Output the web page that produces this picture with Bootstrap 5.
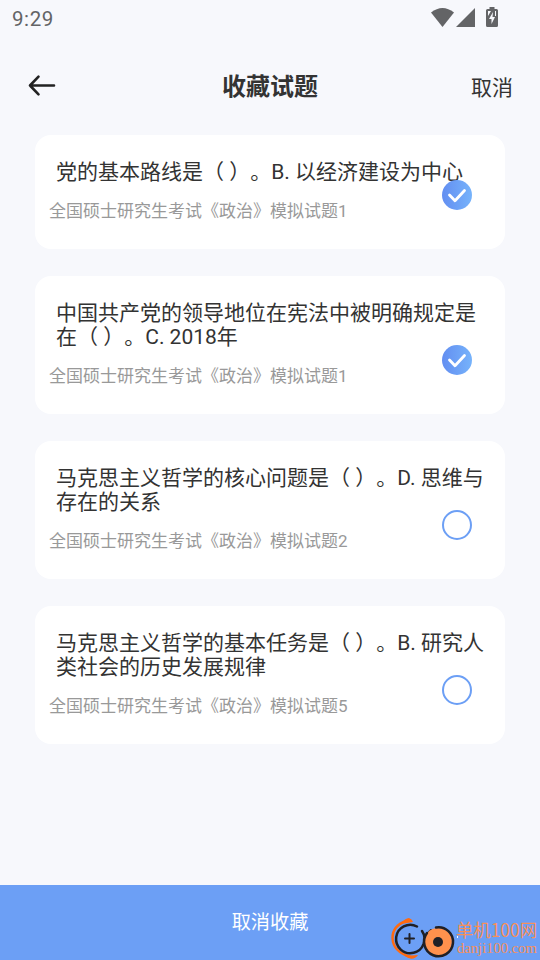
<!DOCTYPE html>
<html lang="zh-CN">
<head>
<meta charset="utf-8">
<meta name="viewport" content="width=device-width, initial-scale=1">
<title>收藏试题</title>
<link href="https://cdn.jsdelivr.net/npm/bootstrap@5.3.0/dist/css/bootstrap.min.css" rel="stylesheet">
<style>
body{background:#f7f8fc;color:#333;font-family:Roboto,"Noto Sans CJK SC",sans-serif;height:960px;overflow:hidden;text-spacing-trim:space-all;font-feature-settings:"chws" 0,"halt" 0}
.status-bar{height:36px;padding:0 42px 0 12px;color:#636466;font-size:20.5px;letter-spacing:.6px;line-height:38px}
.status-icons{margin-top:6px}
.top-bar{height:99px;padding:0 27px 0 28px}
.side{width:90px}
.page-title{font-size:24px;font-weight:700;line-height:30px;color:#333;padding-top:3px;margin-right:1px}
.cancel{font-size:21px;line-height:30px;padding-top:4px}
.questions{padding:0 35px;gap:27px}
.question{border:0;border-radius:16px;padding:25px 14px 25px 14px;background:#fff}
.question h2{font-size:21px;line-height:24px;font-weight:400;margin:0;padding-left:7px;color:#333}
.question p{font-size:17px;line-height:24px;margin:15px 0 1px;color:#999}
.tick{right:33px;bottom:39px;width:30px;height:30px}
.remove{height:75px;border:0;background:#6c9ff5;color:#fff;font-size:19.2px;line-height:28px}
.brand{left:390px;top:917px;width:150px;height:43px}
</style>
</head>
<body class="d-flex flex-column">
<div class="status-bar d-flex justify-content-between flex-shrink-0">
  <span>9:29</span>
  <svg width="68" height="22" viewBox="430 6 68 22" class="status-icons">
    <g fill="#636466"><path d="M442.500 27 431 12.500Q442.500 3.500 454 12.500Z"/><path d="M475 8V27H456Z"/><path d="M489.500 7h5v2h2q1.500 0 1.500 1.500v15q0 1.500-1.500 1.500h-9q-1.500 0-1.500-1.500v-15q0-1.500 1.500-1.500h2Z"/></g>
    <path d="M493 12 489 19h2.500v5l3.500-7h-2.500ZM488 11h3l-3 5ZM495 11h1v5h-1Z" fill="#f7f8fc"/>
  </svg>
</div>
<header class="top-bar d-flex align-items-center justify-content-between flex-shrink-0">
  <div class="side d-flex"><svg width="28" height="24" viewBox="0 0 28 24" fill="none" stroke="#222" stroke-width="2.600" stroke-linecap="round" stroke-linejoin="round"><path d="M2 11.500H26M10.500 2.700 2 11.500l8.500 8.800"/></svg></div>
  <h1 class="page-title mb-0">收藏试题</h1>
  <div class="side cancel text-end">取消</div>
</header>
<main class="questions d-flex flex-column flex-grow-1">
  <article class="question card">
    <h2>党的基本路线是（ ）。B. 以经济建设为中心</h2>
    <p>全国硕士研究生考试《政治》模拟试题1</p>
    <svg class="tick position-absolute" viewBox="0 0 30 30"><defs><linearGradient id="blue"><stop stop-color="#638ef1"/><stop offset="1" stop-color="#76b3fb"/></linearGradient></defs><circle cx="15" cy="15" r="15" fill="url(#blue)"/><path d="m7.500 15 5.500 5.800L22.500 10.500" fill="none" stroke="#fff" stroke-width="2.800" stroke-linecap="round" stroke-linejoin="round"/></svg>
  </article>
  <article class="question card">
    <h2>中国共产党的领导地位在宪法中被明确规定是<br>在（ ）。C. 2018年</h2>
    <p>全国硕士研究生考试《政治》模拟试题1</p>
    <svg class="tick position-absolute" viewBox="0 0 30 30"><circle cx="15" cy="15" r="15" fill="url(#blue)"/><path d="m7.500 15 5.500 5.800L22.500 10.500" fill="none" stroke="#fff" stroke-width="2.800" stroke-linecap="round" stroke-linejoin="round"/></svg>
  </article>
  <article class="question card">
    <h2>马克思主义哲学的核心问题是（ ）。D. 思维与<br>存在的关系</h2>
    <p>全国硕士研究生考试《政治》模拟试题2</p>
    <svg class="tick position-absolute" viewBox="0 0 30 30"><circle cx="15" cy="15" r="14" fill="#fff" stroke="#6c9ff5" stroke-width="2"/></svg>
  </article>
  <article class="question card">
    <h2>马克思主义哲学的基本任务是（ ）。B. 研究人<br>类社会的历史发展规律</h2>
    <p>全国硕士研究生考试《政治》模拟试题5</p>
    <svg class="tick position-absolute" viewBox="0 0 30 30"><circle cx="15" cy="15" r="14" fill="#fff" stroke="#6c9ff5" stroke-width="2"/></svg>
  </article>
</main>
<button class="remove w-100 flex-shrink-0" type="button">取消收藏</button>
<svg class="brand position-absolute" viewBox="390 917 150 43">
  <g fill="none" stroke-linecap="round">
    <path d="M406 921Q392.500 926 392.500 938Q393 952 411 957" stroke="#ff6a10" stroke-width="2.400"/>
    <path d="M401 924Q405 918 409 918Q412 919 413 922ZM405 956Q413 962 418 955Z" fill="#ff6a10"/>
    <path d="M417 926.500A14.200 14.200 0 1 0 422 931" stroke="#202026" stroke-width="2.500"/>
    <path d="M431 930l-4 4M409.500 934v9M405 938.500h9" stroke="#202026" stroke-width="2"/>
    <circle cx="438" cy="942" r="14" fill="#ff914d"/>
    <path d="M436 927.500A14.500 14.500 0 1 1 427 933" stroke="#202026" stroke-width="2.500"/>
    <circle cx="438" cy="942" r="5" fill="#202026"/>
  </g>
  <path d="M457 936h1v2h-1Z" fill="#fff"/>
  <g fill="#f79059"><text x="456" y="937" font-size="18" textLength="81" lengthAdjust="spacingAndGlyphs" font-family="Noto Sans CJK SC, sans-serif">单机100网</text>
  <text x="457" y="953" font-size="14" textLength="80" lengthAdjust="spacingAndGlyphs" font-family="Liberation Serif, serif">danji100.com</text></g>
</svg>
<script src="https://cdn.jsdelivr.net/npm/bootstrap@5.3.0/dist/js/bootstrap.bundle.min.js"></script>
</body>
</html>
